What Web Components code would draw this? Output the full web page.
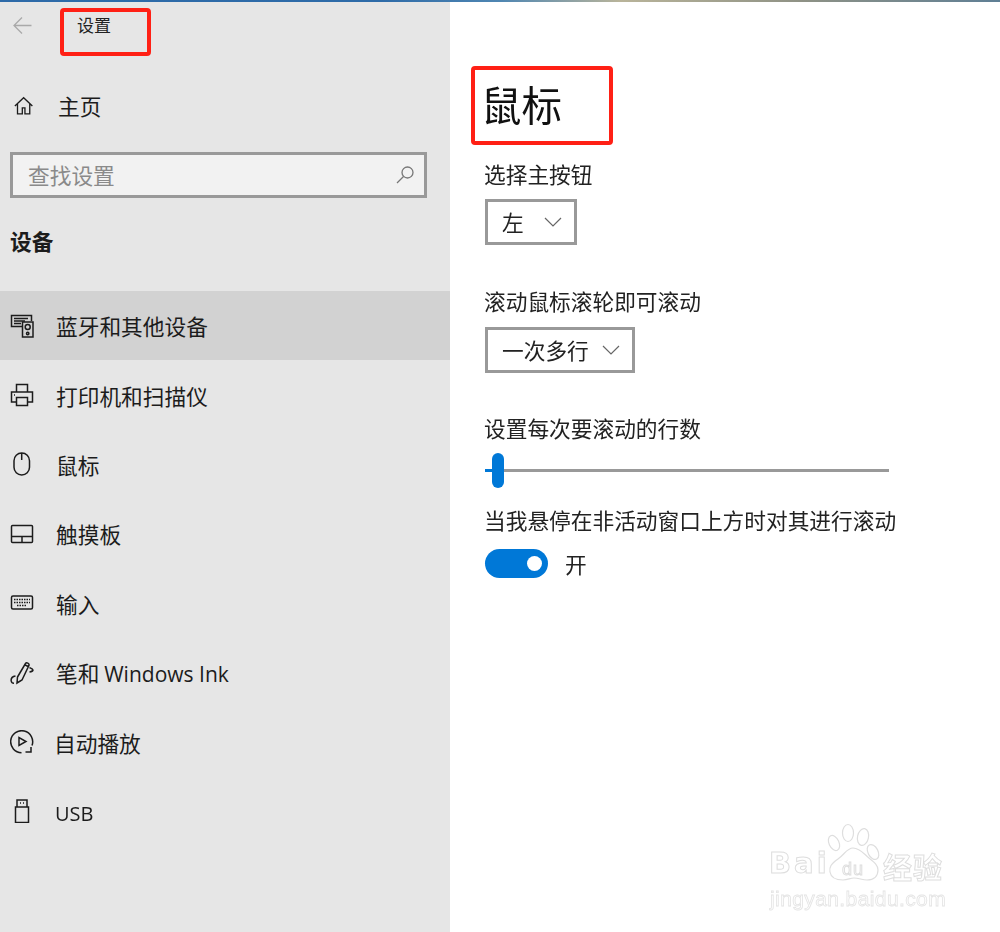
<!DOCTYPE html>
<html lang="zh-CN"><head><meta charset="utf-8"><title>设置</title>
<style>
html,body{margin:0;padding:0;height:932px;overflow:hidden;background:#fff}
body{font-family:"Noto Sans CJK SC","Noto Sans",sans-serif;color:#1c1c1c}
</style></head><body>
<settings-app></settings-app>
<script>
const ICONS={
 home:'<path d="M1 11.500 11 2l10 9.500M4 9v11.500h5.500V13.500h3V20.500H18V9"/>',
 devices:'<path d="M12 12.500H1.500V1.500h20V7M4 4.500h14M4 7h11M4 9.500h7"/><rect x="12.500" y="8" width="10.500" height="15"/><circle cx="17.700" cy="13" r="2.500"/><circle cx="17.700" cy="19.500" r="1.200"/>',
 printer:'<path d="M6.500 9V1.500h11V9M6.500 19H1.500V9h21v10h-5"/><rect x="6.500" y="14.500" width="11" height="8"/><path d="M4 12h1"/>',
 mouse:'<rect x="4" y="1" width="15.500" height="22" rx="7.700"/><path d="M11.700 1v7"/>',
 touchpad:'<rect x="1.500" y="3.500" width="21" height="17" rx="1"/><path d="M1.500 14.500h21M12 14.500v6"/>',
 keyboard:'<rect x="1.500" y="5" width="21" height="13" rx="1.500"/><path d="M4 8.500h16M4 11.500h16M7 14.500h10" stroke-dasharray="1.500 1"/>',
 pen:'<path d="M7.500 16 15.500 2.500c1-1.500 4-.1 3.500 1.800L12 19l-5 3zM14.500 3.500l4.500 2.500M5.500 15C2.500 15.500.8 17.500 1.200 20c.2 1.300 1.300 2.300 2.800 2.300M19.500 6.500c1.500.7 3.300 1.300 3.500 2.500-.2 1-1.500 1.700-3.500 2"/>',
 autoplay:'<path d="M11.500 22.700A11 11 0 1 1 22 15.500"/><path d="M9 7.500v8l7-4zM21 17v5h-5.500"/>',
 usb:'<path d="M7 1h10v7H7zM10 4h1M13 4h1M5.500 8h13v15.500h-13z"/>'
};
const def=(name,html)=>customElements.define(name,class extends HTMLElement{
  constructor(){super();this.attachShadow({mode:'open'}).innerHTML=html(this)}
});
def('ui-icon',el=>`<style>:host{display:block;width:24px;height:24px;flex:none}svg{display:block;width:100%;height:100%;fill:none;stroke:#1c1c1c;stroke-width:1.500}</style>
<svg viewBox="0 0 24 24">${ICONS[el.getAttribute('name')]||''}</svg>`);
def('nav-item',el=>`<style>:host{display:flex;align-items:center;height:69.4px;padding-left:10px;gap:22px;font-size:21.7px;box-sizing:border-box}
:host([active]){background:#d2d2d2}
span{white-space:nowrap;margin-left:var(--tx,0)}</style>
<ui-icon name="${el.getAttribute('icon')}"></ui-icon><span><slot></slot></span>`);
def('latin-text',()=>`<style>:host{font-family:"Open Sans",sans-serif;font-size:var(--ls,21px)}</style><slot></slot>`);
def('search-box',()=>`<style>:host{display:flex;align-items:center;justify-content:space-between;box-sizing:border-box;width:417px;height:46px;margin-left:10px;border:3px solid #999;background:#f2f2f2;padding:0 8px 0 15px;font-size:21.7px;color:#8a8a8a}
span{margin-bottom:2px}
svg{width:22px;height:22px;fill:none;stroke:#777;stroke-width:1.300}</style>
<span><slot></slot></span><svg viewBox="0 0 22 22"><circle cx="13.500" cy="8.500" r="5.500"/><path d="M9.500 12.500 3 19"/></svg>`);
def('side-bar',()=>`<style>:host{display:flex;flex-direction:column;width:450px;height:930px;background:#e6e6e6;flex:none}
.top{display:flex;height:49px;box-sizing:border-box;padding:12px 0 0 13px}
.top svg{width:19px;height:19px;fill:none;stroke:#a9a9a9;stroke-width:1.300;margin-right:45px;margin-top:2px}
.top span{font-size:17px;line-height:22px;color:#222}
.home{display:flex;align-items:center;height:70px;margin-top:19px;padding-left:14px;gap:23px;font-size:21.7px;box-sizing:border-box}
.home ui-icon{width:21px;height:21px;margin-top:2px}
search-box{margin-top:12px}
h2{font-size:21.7px;font-weight:700;margin:27px 0 0 10px;line-height:32px;height:66px}
</style>
<div class="top"><svg viewBox="0 0 19 19"><path d="M18.500 9.500H1M9 1.500l-8 8 8 8"/></svg><span>设置</span></div>
<div class="home"><ui-icon name="home"></ui-icon><span>主页</span></div>
<search-box>查找设置</search-box>
<h2>设备</h2>
<nav-item icon="devices" active>蓝牙和其他设备</nav-item>
<nav-item icon="printer">打印机和扫描仪</nav-item>
<nav-item icon="mouse">鼠标</nav-item>
<nav-item icon="touchpad">触摸板</nav-item>
<nav-item icon="keyboard">输入</nav-item>
<nav-item icon="pen">笔和 <latin-text>Windows Ink</latin-text></nav-item>
<nav-item icon="autoplay" style="--tx:-2px">自动播放</nav-item>
<nav-item icon="usb" style="--ls:20px;--tx:-1px"><latin-text>USB</latin-text></nav-item>`);
def('drop-down',()=>`<style>:host{display:inline-flex;align-items:center;box-sizing:border-box;height:46px;border:3px solid #999;padding:0 12px 0 14px;gap:var(--g,13px);font-size:21.7px;color:#222}
span{margin-bottom:2px}
svg{width:18px;height:10px;fill:none;stroke:#666;stroke-width:1.200}</style>
<span><slot></slot></span><svg viewBox="0 0 18 10"><path d="M1 1l8 8 8-8"/></svg>`);
def('range-slider',()=>`<style>:host{display:block;position:relative;width:404px;height:36px}
.t{position:absolute;left:0;right:0;top:16px;height:3px;background:#999}
.f{position:absolute;left:0;width:10px;top:16px;height:3px;background:#0078d7}
.h{position:absolute;left:7px;top:0;width:12px;height:35px;border-radius:6px;background:#0078d7}</style>
<div class="t"></div><div class="f"></div><div class="h"></div>`);
def('toggle-switch',()=>`<style>:host{display:flex;align-items:center;gap:17px;font-size:21.7px}
.s{width:63px;height:29px;border-radius:15px;background:#0078d7;position:relative}
.s i{position:absolute;right:6px;top:7px;width:15px;height:15px;border-radius:50%;background:#fff}</style>
<div class="s"><i></i></div><span><slot></slot></span>`);
def('red-frame',()=>`<style>:host{display:block;position:absolute;box-sizing:border-box;border:4px solid #ff2015;border-radius:4px;pointer-events:none}</style>`);
def('baidu-mark',()=>`<style>:host{display:block;position:absolute;left:766px;top:822px;width:180px;height:90px;color:transparent;-webkit-text-stroke:1px #dedede;font-family:"Liberation Sans",sans-serif}
svg{position:absolute;left:0;top:0;width:180px;height:70px;fill:#fff;stroke:#dedede;stroke-width:1.200}
div{position:absolute;white-space:nowrap}
.b{left:3px;top:24px;font:700 29px/34px "DejaVu Sans",sans-serif;letter-spacing:3px}
.d{left:76px;top:37px;font-size:18px;line-height:20px;letter-spacing:1px}
.c{left:117px;top:28px;font:700 29px/32px "Noto Sans CJK SC",sans-serif;letter-spacing:1px}
.u{left:4px;top:65px;font-size:21px;line-height:24px;letter-spacing:.4px;-webkit-text-stroke:.8px #e4e4e4}</style>
<svg viewBox="0 0 180 70"><ellipse cx="68" cy="21" rx="5" ry="8" transform="rotate(-25 68 21)"/><ellipse cx="82" cy="11" rx="5.500" ry="8.500"/><ellipse cx="97" cy="15" rx="5.500" ry="8.500" transform="rotate(12 97 15)"/><ellipse cx="107" cy="30" rx="5" ry="8" transform="rotate(-28 107 30)"/><path d="M87 26c-6 0-9 7-15 11-7 5-9 8-8 13 1 6 7 8 13 8 5 0 7-2 11-2 5 0 8 2 13 2 7 0 11-4 11-10 0-5-4-8-9-12-5-4-9-10-16-10z"/></svg>
<div class="b">Bai</div><div class="d">du</div><div class="c">经验</div><div class="u">jingyan.baidu.com</div>`);
def('main-pane',()=>`<style>:host{display:block;flex:1;box-sizing:border-box;padding:0 0 0 35px;font-size:21.7px;color:#222}
h1{font-weight:400;font-size:40.500px;line-height:58px;margin:73px 0 0 -4px;color:#111}
.l{line-height:32px;display:block;margin-left:-1px}
</style>
<h1>鼠标</h1>
<span class="l" style="margin-top:25px">选择主按钮</span>
<drop-down style="margin-top:9px;--g:20px">左</drop-down>
<span class="l" style="margin-top:40px">滚动鼠标滚轮即可滚动</span>
<drop-down style="margin-top:10px">一次多行</drop-down>
<span class="l" style="margin-top:39px">设置每次要滚动的行数</span>
<range-slider style="margin-top:9px"></range-slider>
<span class="l" style="margin-top:15px">当我悬停在非活动窗口上方时对其进行滚动</span>
<toggle-switch style="margin-top:12px">开</toggle-switch>`);
def('settings-app',()=>`<style>:host{display:block;position:relative;width:1000px;height:932px;overflow:hidden;background:#fff}
.bar{height:2px;background:linear-gradient(90deg,#2d6aa8 0,#2e6ba8 38%,#4f86b2 50%,#b9b49a 62%,#8f9285 80%,#5f7f95 100%)}
.w{display:flex;filter:blur(.5px)}</style>
<div class="bar"></div><div class="w"><side-bar></side-bar><main-pane></main-pane></div>
<baidu-mark></baidu-mark>
<red-frame style="left:60px;top:8px;width:91px;height:48px"></red-frame>
<red-frame style="left:471px;top:66px;width:142px;height:79px"></red-frame>`);
</script>
</body></html>
